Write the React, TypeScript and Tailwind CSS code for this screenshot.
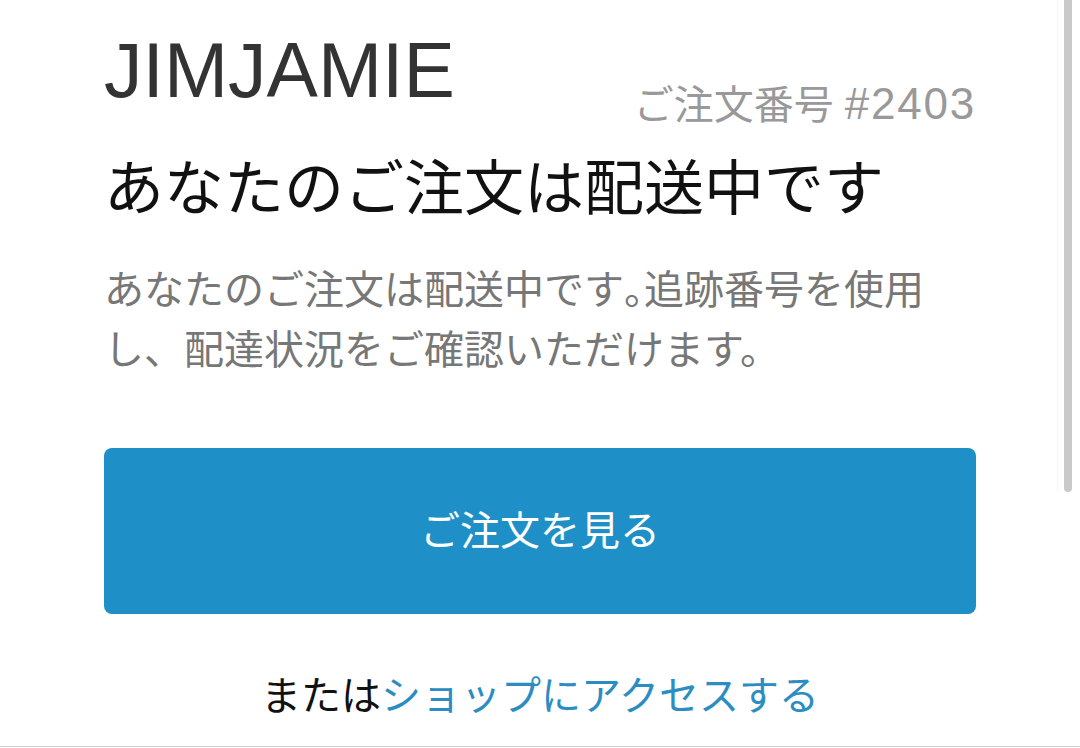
import React from "react";

const font = { fontFamily: '"Liberation Sans", "Noto Sans CJK JP", sans-serif' };

export default function App() {
  return (
    <div
      className="relative w-[1080px] h-[747px] bg-white border-b border-[#cfcfcf] overflow-hidden"
      style={font}
    >
      <div className="px-[104px] pt-[31px]">
        <div className="flex items-start justify-between">
          <div className="text-[77px] leading-[78px] h-[78px] text-[#333333]">JIMJAMIE</div>
          <div className="mt-[53px] text-[40px] leading-[40px] text-[#999999] whitespace-nowrap">
            ご注文番号 <span className="text-[44px] tracking-[0.04em]">#2403</span>
          </div>
        </div>
        <h1 className="mt-[29px] text-[60px] leading-[72px] text-[#111111] font-normal whitespace-nowrap">
          あなたのご注文は配送中です
        </h1>
        <p className="mt-[34px] text-[40px] leading-[60px] text-[#777777] whitespace-nowrap">
          あなたのご注文は配送中です<span className="tracking-[-0.5em]">。</span>追跡番号を使用
          <br />
          し、配達状況をご確認いただけます。
        </p>
        <a
          href="#"
          className="mt-[68px] flex h-[166px] items-center justify-center rounded-[8px] bg-[#1e8fc7] text-[40px] text-white"
        >
          ご注文を見る
        </a>
        <div className="mt-[52px] text-center text-[40px] leading-[60px] text-[#111111] whitespace-nowrap">
          または<a href="#" className="text-[#2b8dc2]">ショップにアクセスする</a>
        </div>
      </div>
      <div className="absolute right-0 top-0 h-[492px] w-[23px] border-l border-[#f6f6f6]">
        <div className="absolute right-[8px] top-0 h-[492px] w-[8px] rounded-b-full bg-[#c9c9c9]" />
      </div>
    </div>
  );
}
